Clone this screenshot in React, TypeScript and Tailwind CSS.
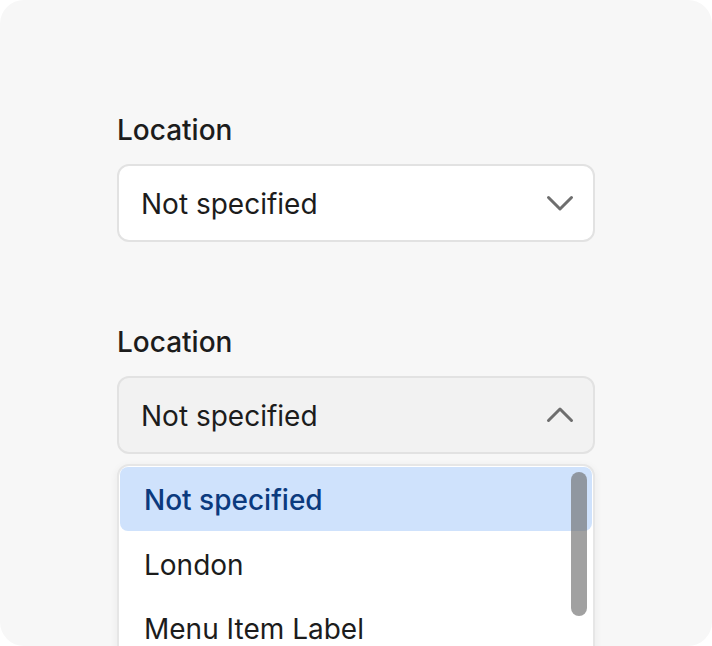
import React from "react";

const font = { fontFamily: "Inter, 'Noto Sans', sans-serif" };

function Chevron({ up }: { up?: boolean }) {
  return (
    <svg width="28" height="28" viewBox="0 0 28 28" fill="none" className="shrink-0">
      <path
        d={up ? "M2.5 19.5l11.5-11.5 11.5 11.5" : "M2.5 8.5l11.5 11.5 11.5-11.5"}
        stroke="#6e6e6e"
        strokeWidth="3"
        strokeLinecap="round"
        strokeLinejoin="round"
      />
    </svg>
  );
}

const items = ["Not specified", "London", "Menu Item Label", "Manchester"];

export default function App() {
  return (
    <div className="bg-white w-[712px] h-[646px]" style={font}>
      <div className="relative w-[712px] h-[646px] bg-[#f7f7f7] rounded-[24px] overflow-hidden pl-[117px] pt-[112px]">
        <div className="w-[478px]">
          {/* closed select */}
          <label className="block text-[28px] leading-[36px] font-medium text-[#1c1c1c] mb-4">Location</label>
          <div className="h-[78px] flex items-center justify-between pl-[22px] pr-[19px] bg-white border-2 border-[#e2e2e2] rounded-[12px]">
            <span className="text-[28px] text-[#1c1c1c] pt-[2px]">Not specified</span>
            <Chevron />
          </div>

          {/* open select */}
          <label className="block text-[28px] leading-[36px] font-medium text-[#1c1c1c] mt-[82px] mb-4">Location</label>
          <div className="h-[78px] flex items-center justify-between pl-[22px] pr-[19px] bg-[#f2f2f2] border-2 border-[#e2e2e2] rounded-[12px]">
            <span className="text-[28px] text-[#1c1c1c] pt-[2px]">Not specified</span>
            <Chevron up />
          </div>

          <div className="relative mt-[10px] bg-white border-2 border-[#e6e6e6] rounded-[12px] p-[1px] shadow-[0_2px_8px_rgba(0,0,0,0.06)] h-[260px]">
            {items.map((it, i) => (
              <div
                key={it}
                className={
                  i === 0
                    ? "h-[64px] flex items-center pl-[24px] pt-[2px] rounded-[8px] bg-[#cfe2fc] text-[#0b3a7e] text-[28px] font-medium"
                    : "h-[64px] flex items-center pl-[24px] pt-[4px] text-[28px] text-[#1c1c1c]"
                }
              >
                {it}
              </div>
            ))}
            <div className="absolute right-[6px] top-[6px] w-[16px] h-[144px] rounded-full bg-[rgba(110,110,110,0.65)]" />
          </div>
        </div>
      </div>
    </div>
  );
}
